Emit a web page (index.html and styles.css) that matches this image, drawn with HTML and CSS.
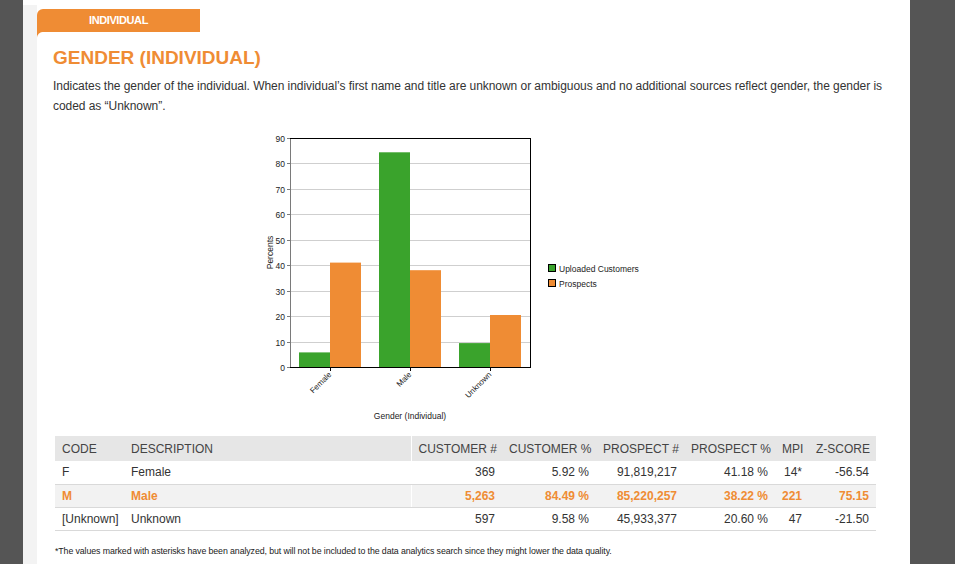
FILE: index.html
```html
<!DOCTYPE html>
<html lang="en">
<head>
<meta charset="utf-8">
<title>Gender (Individual)</title>
<link rel="stylesheet" href="styles.css">
</head>
<body>
<div class="page">
  <div class="rail"></div>
  <div class="main">
    <div class="tab">INDIVIDUAL</div>
    <div class="panel">
      <h1 class="title">GENDER (INDIVIDUAL)</h1>
      <p class="desc">Indicates the gender of the individual. When individual’s first name and title are unknown or ambiguous and no additional sources reflect gender, the gender is coded as “Unknown”.</p>
      <div class="chart">
        <svg class="chart-svg" width="824" height="308" viewBox="53 128 824 308" xmlns="http://www.w3.org/2000/svg">
          <g class="grid" stroke="#cfcfcf" stroke-width="1">
            <line x1="290" x2="530" y1="342.5" y2="342.5"/>
            <line x1="290" x2="530" y1="316.5" y2="316.5"/>
            <line x1="290" x2="530" y1="291.5" y2="291.5"/>
            <line x1="290" x2="530" y1="265.5" y2="265.5"/>
            <line x1="290" x2="530" y1="240.5" y2="240.5"/>
            <line x1="290" x2="530" y1="214.5" y2="214.5"/>
            <line x1="290" x2="530" y1="189.5" y2="189.5"/>
            <line x1="290" x2="530" y1="163.5" y2="163.5"/>
          </g>
          <g class="bars">
            <rect x="299" y="352.4" width="31" height="15.1" fill="#3aa32c"/>
            <rect x="330" y="262.6" width="31" height="104.9" fill="#ef8c34"/>
            <rect x="379" y="152.3" width="31" height="215.2" fill="#3aa32c"/>
            <rect x="410" y="270.2" width="31" height="97.3" fill="#ef8c34"/>
            <rect x="459" y="343.1" width="31" height="24.4" fill="#3aa32c"/>
            <rect x="490" y="315" width="31" height="52.5" fill="#ef8c34"/>
          </g>
          <g class="axes" fill="none">
            <line x1="290.5" x2="290.5" y1="138" y2="368" stroke="#7a7a7a"/>
            <line x1="290" x2="531" y1="138.5" y2="138.5" stroke="#000"/>
            <line x1="530.5" x2="530.5" y1="138" y2="368" stroke="#000"/>
            <line x1="290" x2="531" y1="367.5" y2="367.5" stroke="#000"/>
            <g stroke="#7a7a7a">
              <line x1="287" x2="290" y1="138.5" y2="138.5"/>
              <line x1="287" x2="290" y1="163.5" y2="163.5"/>
              <line x1="287" x2="290" y1="189.5" y2="189.5"/>
              <line x1="287" x2="290" y1="214.5" y2="214.5"/>
              <line x1="287" x2="290" y1="240.5" y2="240.5"/>
              <line x1="287" x2="290" y1="265.5" y2="265.5"/>
              <line x1="287" x2="290" y1="291.5" y2="291.5"/>
              <line x1="287" x2="290" y1="316.5" y2="316.5"/>
              <line x1="287" x2="290" y1="342.5" y2="342.5"/>
              <line x1="287" x2="290" y1="367.5" y2="367.5"/>
            </g>
            <g stroke="#000">
              <line x1="330.5" x2="330.5" y1="367" y2="371"/>
              <line x1="410.5" x2="410.5" y1="367" y2="371"/>
              <line x1="490.5" x2="490.5" y1="367" y2="371"/>
            </g>
          </g>
          <g class="ylabels" text-anchor="end">
            <text x="285" y="141.5">90</text>
            <text x="285" y="166.5">80</text>
            <text x="285" y="192.5">70</text>
            <text x="285" y="217.5">60</text>
            <text x="285" y="243.5">50</text>
            <text x="285" y="268.5">40</text>
            <text x="285" y="294.5">30</text>
            <text x="285" y="319.5">20</text>
            <text x="285" y="345.5">10</text>
            <text x="285" y="370.5">0</text>
          </g>
          <text class="ytitle" x="273" y="252.5" text-anchor="middle" transform="rotate(-90 273 252.5)">Percents</text>
          <g class="xlabels" text-anchor="end">
            <text x="332" y="375" transform="rotate(-45 332 375)">Female</text>
            <text x="412" y="375" transform="rotate(-45 412 375)">Male</text>
            <text x="492" y="375" transform="rotate(-45 492 375)">Unknown</text>
          </g>
          <text class="xtitle" x="410" y="418.5" text-anchor="middle">Gender (Individual)</text>
          <g class="legend">
            <rect x="548.5" y="264.5" width="7" height="7" fill="#3aa32c" stroke="#000"/>
            <text x="559" y="271.5">Uploaded Customers</text>
            <rect x="548.5" y="279.5" width="7" height="7" fill="#ef8c34" stroke="#000"/>
            <text x="559" y="286.5">Prospects</text>
          </g>
        </svg>
      </div>
      <table class="data">
        <colgroup>
          <col class="c-code"><col class="c-desc"><col class="c-cnum"><col class="c-cpct"><col class="c-pnum"><col class="c-ppct"><col class="c-mpi"><col class="c-z">
        </colgroup>
        <thead>
          <tr>
            <th class="l">CODE</th>
            <th class="l sep">DESCRIPTION</th>
            <th>CUSTOMER #</th>
            <th>CUSTOMER %</th>
            <th>PROSPECT #</th>
            <th>PROSPECT %</th>
            <th>MPI</th>
            <th>Z-SCORE</th>
          </tr>
        </thead>
        <tbody>
          <tr>
            <td class="l">F</td>
            <td class="l sep">Female</td>
            <td>369</td>
            <td>5.92 %</td>
            <td>91,819,217</td>
            <td>41.18 %</td>
            <td>14*</td>
            <td>-56.54</td>
          </tr>
          <tr class="hl">
            <td class="l">M</td>
            <td class="l sep">Male</td>
            <td>5,263</td>
            <td>84.49 %</td>
            <td>85,220,257</td>
            <td>38.22 %</td>
            <td>221</td>
            <td>75.15</td>
          </tr>
          <tr>
            <td class="l">[Unknown]</td>
            <td class="l sep">Unknown</td>
            <td>597</td>
            <td>9.58 %</td>
            <td>45,933,377</td>
            <td>20.60 %</td>
            <td>47</td>
            <td>-21.50</td>
          </tr>
        </tbody>
      </table>
      <p class="note">*The values marked with asterisks have been analyzed, but will not be included to the data analytics search since they might lower the data quality.</p>
    </div>
  </div>
</div>
</body>
</html>
```

FILE: styles.css
```css
* { box-sizing: border-box; }

html, body {
  margin: 0;
  padding: 0;
  background: #555555;
  height: 564px;
  overflow: hidden;
}

body {
  font-family: "Liberation Sans", Arial, sans-serif;
  color: #333333;
}

.page {
  margin-left: 23px;
  width: 887px;
  height: 564px;
  background: #ffffff;
  display: flex;
}

.rail {
  width: 14px;
  margin-top: 5px;
  background: #f3f3f3;
  flex: none;
}

.main {
  flex: 1;
  display: flex;
  flex-direction: column;
}

.tab {
  margin-top: 9px;
  width: 163px;
  height: 23px;
  line-height: 23px;
  background: #ef8c34;
  color: #ffffff;
  font-weight: bold;
  font-size: 11px;
  letter-spacing: -0.4px;
  text-align: center;
  border-top-left-radius: 6px;
}

.panel {
  position: relative;
  padding: 0 14px 0 16px;
}

.panel::before {
  content: "";
  position: absolute;
  left: 0;
  top: 0;
  width: 6px;
  height: 6px;
  background: radial-gradient(circle at 100% 100%, #ffffff 5.5px, #ef8c34 6.5px);
}

.title {
  margin: 14px 0 0 0;
  font-size: 19px;
  line-height: 24px;
  font-weight: bold;
  color: #ef8c34;
}

.desc {
  margin: 6px 0 0 0;
  font-size: 12px;
  line-height: 20px;
  letter-spacing: -0.05px;
  color: #333333;
}

.chart {
  margin-top: 12px;
  height: 308px;
}

.chart-svg {
  display: block;
  font-family: "Liberation Sans", Arial, sans-serif;
  font-size: 8px;
}

.chart-svg text {
  fill: #222222;
}

.ylabels text {
  font-size: 8.5px;
}

.legend text {
  font-size: 8.5px;
}

.xtitle, .ytitle {
  font-size: 8.5px;
}

.data {
  margin-left: 2px;
  width: 821px;
  border-collapse: collapse;
  table-layout: fixed;
  font-size: 12px;
}

.c-code { width: 69px; }
.c-desc { width: 287px; }
.c-cnum { width: 91px; }
.c-cpct { width: 94px; }
.c-pnum { width: 88px; }
.c-ppct { width: 91px; }
.c-mpi { width: 34px; }
.c-z { width: 67px; }

.data th,
.data td {
  padding: 0 7px;
  text-align: right;
  white-space: nowrap;
  font-weight: normal;
}

.data th {
  height: 25px;
  background: #e6e6e6;
  color: #444444;
}

.data td {
  height: 23px;
  border-bottom: 1px solid #d9d9d9;
  color: #333333;
}

.data .l {
  text-align: left;
}

.data .sep {
  border-right: 1px solid #ffffff;
}

.data tr.hl td {
  background: #f2f2f2;
  color: #ef8c34;
  font-weight: bold;
}

.note {
  margin: 15px 0 0 2px;
  font-size: 8.8px;
  letter-spacing: -0.1px;
  color: #222222;
}
```
